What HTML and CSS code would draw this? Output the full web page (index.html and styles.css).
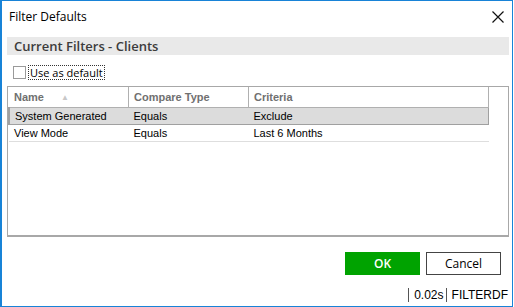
FILE: index.html
```html
<!DOCTYPE html>
<html lang="en">
<head>
  <meta charset="UTF-8">
  <meta name="viewport" content="width=device-width, initial-scale=1.0">
  <title>Filter Defaults</title>
  <link rel="stylesheet" href="styles.css">
</head>
<body>
  <div class="window">
    <div class="titlebar">
      <span class="title">Filter Defaults</span>
      <svg class="close" width="12" height="12" viewBox="0 0 12 12">
        <path d="M0.5 0.5 L11.5 11.5 M11.5 0.5 L0.5 11.5" stroke="#111" stroke-width="1.2" fill="none"/>
      </svg>
    </div>

    <div class="content">
      <div class="section-header">Current Filters - Clients</div>

      <div class="default-row">
        <span class="checkbox"></span>
        <label class="default-label">Use as default</label>
      </div>

      <div class="grid">
        <table>
          <thead>
            <tr>
              <th class="col-name">Name <span class="sort">&#9650;</span></th>
              <th class="col-type">Compare Type</th>
              <th class="col-criteria">Criteria</th>
            </tr>
          </thead>
          <tbody>
            <tr class="selected">
              <td>System Generated</td>
              <td>Equals</td>
              <td>Exclude</td>
            </tr>
            <tr>
              <td>View Mode</td>
              <td>Equals</td>
              <td>Last 6 Months</td>
            </tr>
          </tbody>
        </table>
      </div>

      <div class="actions">
        <button class="btn btn-ok">OK</button>
        <button class="btn btn-cancel">Cancel</button>
      </div>
    </div>

    <div class="statusbar">
      <span class="status-cell">0.02s</span>
      <span class="status-cell">FILTERDF</span>
    </div>
  </div>
</body>
</html>
```

FILE: styles.css
```css
body {
  margin: 0;
  padding: 0;
  background: #fff;
  font-family: "Open Sans", "Noto Sans", sans-serif;
}
.window {
  width: 510px;
  height: 305px;
  border: 1px solid #1883d7;
  border-left-width: 2px;
  background: #fff;
  display: flex;
  flex-direction: column;
}
.titlebar {
  height: 31px;
  display: flex;
  align-items: center;
  justify-content: space-between;
  padding: 0 7px 0 7px;
}
.title {
  font-size: 12px;
  color: #000;
}
.close {
  margin-right: 1px;
}
.content {
  padding: 5px 3px 0 5px;
  flex: 1;
  display: flex;
  flex-direction: column;
}
.section-header {
  height: 18px;
  line-height: 18px;
  background: #e9e9e9;
  color: #3c3c3c;
  font-size: 13px;
  font-weight: 600;
  padding-left: 7px;
}
.default-row {
  display: flex;
  align-items: center;
  height: 15px;
  margin-top: 10px;
  padding-left: 6px;
}
.checkbox {
  width: 11px;
  height: 11px;
  border: 1px solid #9a9a9a;
  background: #fff;
}
.default-label {
  font-size: 11px;
  color: #000;
  margin-left: 2px;
  border: 1px dotted #333;
  padding: 0 1px;
  line-height: 13px;
}
.grid {
  margin-top: 6px;
  height: 148px;
  border: 1px solid #a8a8a8;
  border-bottom-width: 2px;
  font-family: "Liberation Sans", Arial, sans-serif;
  font-size: 11px;
}
table {
  border-collapse: collapse;
  width: 481px;
}
th {
  height: 20px;
  text-align: left;
  font-weight: bold;
  color: #707070;
  padding: 0 5px;
  border-right: 1px solid #b0b0b0;
  border-bottom: 1px solid #b0b0b0;
}
.col-name { width: 109px; }
.col-type { width: 109px; }
.sort {
  color: #c8c8c8;
  font-size: 8px;
  margin-left: 14px;
  vertical-align: 1px;
}
td {
  height: 16px;
  padding: 0 5px;
  color: #000;
  border-bottom: 1px solid #dedede;
}
tr.selected td {
  background: #dcdcdc;
  border-top: 1px solid #a0a0a0;
  border-bottom: 1px solid #a0a0a0;
}
tr.selected td:first-child {
  border-left: 2px solid #a0a0a0;
}
tr.selected td:last-child {
  border-right: 1px solid #a0a0a0;
}
.actions {
  display: flex;
  justify-content: flex-end;
  gap: 6px;
  margin-top: 15px;
  padding-right: 8px;
}
.btn {
  width: 75px;
  height: 23px;
  font-family: "Open Sans", "Noto Sans", sans-serif;
  font-size: 12px;
  cursor: pointer;
}
.btn-ok {
  background: #00a300;
  color: #fff;
  border: none;
  font-weight: 600;
}
.btn-cancel {
  background: #fff;
  color: #000;
  border: 1px solid #444;
}
.statusbar {
  height: 18px;
  display: flex;
  justify-content: flex-end;
  align-items: center;
  padding-right: 2px;
  padding-bottom: 2px;
  font-family: "Liberation Sans", Arial, sans-serif;
  font-size: 12px;
  color: #000;
}
.status-cell {
  border-left: 1px solid #555;
  padding: 0 2px 0 5px;
  line-height: 14px;
}
```
